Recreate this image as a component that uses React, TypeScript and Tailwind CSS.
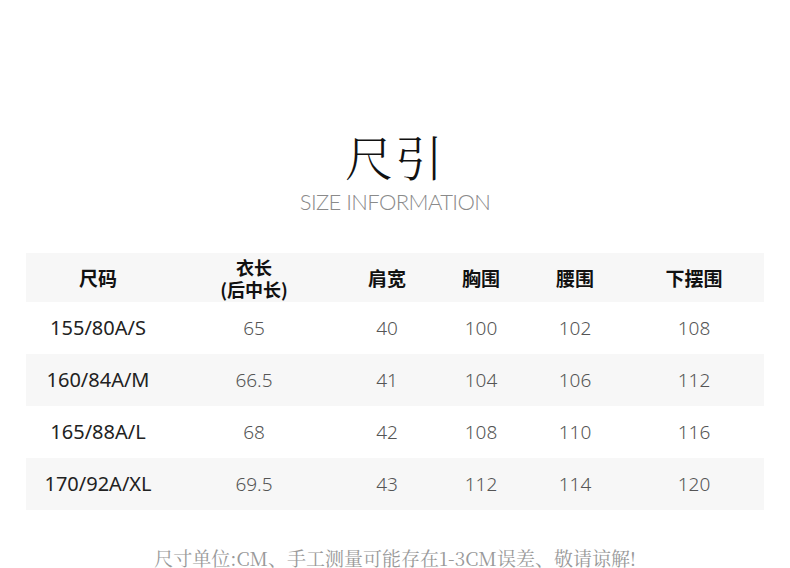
const cols = ["w-[144px]", "w-[168px]", "w-[98px]", "w-[90px]", "w-[98px]", "w-[140px]"];

const rows = [
  ["155/80A/S", "65", "40", "100", "102", "108"],
  ["160/84A/M", "66.5", "41", "104", "106", "112"],
  ["165/88A/L", "68", "42", "108", "110", "116"],
  ["170/92A/XL", "69.5", "43", "112", "114", "120"],
];

const sans = "font-['Noto_Sans','Noto_Sans_CJK_SC',sans-serif]";

export default function App() {
  return (
    <div className="h-[568px] w-[790px] overflow-hidden bg-white">
      <div className="flex flex-col items-center pt-[126px]">
        <h1 className="font-['Noto_Serif_CJK_SC','Noto_Sans_CJK_SC',serif] text-[48px] font-light leading-[60px] tracking-[2px] text-[#111]">
          尺引
        </h1>
        <p className="mt-[3px] font-['Lato','Open_Sans',sans-serif] text-[22px] font-light leading-[26px] tracking-[-0.6px] text-[#8a8a8a]">
          SIZE INFORMATION
        </p>
      </div>

      <div className="mx-[26px] mt-[38px]">
        <div className="flex h-[49px] items-center bg-[#f7f7f7] font-['Noto_Sans_CJK_SC',sans-serif] text-[19px] font-bold leading-[22px] text-[#111]">
          <div className={`${cols[0]} text-center`}>尺码</div>
          <div className={`${cols[1]} flex flex-col items-center text-[18px] leading-[22px]`}>
            <span>衣长</span>
            <span>(后中长)</span>
          </div>
          <div className={`${cols[2]} text-center`}>肩宽</div>
          <div className={`${cols[3]} text-center`}>胸围</div>
          <div className={`${cols[4]} text-center`}>腰围</div>
          <div className={`${cols[5]} text-center`}>下摆围</div>
        </div>
        {rows.map((r, i) => (
          <div
            key={r[0]}
            className={`flex h-[52px] items-center ${sans} text-[19px] ${i % 2 ? "bg-[#f7f7f7]" : "bg-white"}`}
          >
            {r.map((c, j) => (
              <div
                key={j}
                className={`${cols[j]} text-center ${j === 0 ? "text-[20px] text-[#222]" : "font-light text-[#555]"}`}
              >
                {c}
              </div>
            ))}
          </div>
        ))}
      </div>

      <p className="mt-[36px] text-center font-['Noto_Serif_CJK_SC','Liberation_Serif','Noto_Sans_CJK_SC',serif] text-[19px] leading-[24px] text-[#999]">
        尺寸单位:CM、手工测量可能存在1-3CM误差、敬请谅解!
      </p>
    </div>
  );
}
